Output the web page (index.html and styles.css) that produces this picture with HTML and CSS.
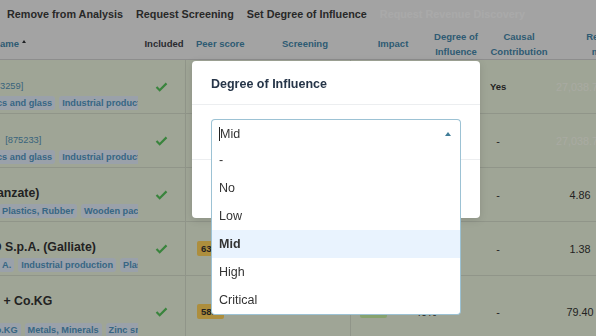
FILE: index.html
```html
<!DOCTYPE html>
<html lang="en">
<head>
    <meta charset="UTF-8">
    <meta name="viewport" content="width=device-width, initial-scale=1.0">
    <title>Analysis - Degree of Influence</title>
    <link rel="stylesheet" href="styles.css">
</head>
<body>
    <div class="toolbar">
        <button class="tool">Remove from Analysis</button>
        <button class="tool">Request Screening</button>
        <button class="tool">Set Degree of Influence</button>
        <button class="tool" disabled>Request Revenue Discovery</button>
    </div>

    <div class="table-scroll">
        <div class="table">
            <div class="row head">
                <div class="cell first">ame <span class="sort"></span></div>
                <div class="cell dark">Included</div>
                <div class="cell peer">Peer score</div>
                <div class="cell">Screening</div>
                <div class="cell">Impact</div>
                <div class="cell">Degree of<br>Influence</div>
                <div class="cell">Causal<br>Contribution</div>
                <div class="cell">Revenue<br>mEUR</div>
            </div>

            <div class="row">
                <div class="cell name">
                    <div class="title"><span class="id">3259]</span></div>
                    <div class="tags">
                        <span class="tag cut-m">cs and glass</span>
                        <span class="tag">Industrial production</span>
                    </div>
                </div>
                <div class="cell incl"><svg class="check" viewBox="0 0 14 11" width="13" height="10"><path d="M1.5 5.5 L5 9 L12.5 1.5"/></svg></div>
                <div class="cell peer"><span class="badge score">71.4</span></div>
                <div class="cell"></div>
                <div class="cell impact"></div>
                <div class="cell">-</div>
                <div class="cell causal"><span class="val strong">Yes</span></div>
                <div class="cell revenue muted">27,038.72</div>
            </div>

            <div class="row">
                <div class="cell name">
                    <div class="title"><span class="id">&nbsp;&nbsp;[875233]</span></div>
                    <div class="tags">
                        <span class="tag cut-m">cs and glass</span>
                        <span class="tag">Industrial production</span>
                    </div>
                </div>
                <div class="cell incl"><svg class="check" viewBox="0 0 14 11" width="13" height="10"><path d="M1.5 5.5 L5 9 L12.5 1.5"/></svg></div>
                <div class="cell peer"><span class="badge score">71.4</span></div>
                <div class="cell"></div>
                <div class="cell impact"></div>
                <div class="cell">-</div>
                <div class="cell causal"><span class="val">-</span></div>
                <div class="cell revenue muted">27,038.72</div>
            </div>

            <div class="row">
                <div class="cell name">
                    <div class="title"><span class="cut-a">anzate)</span></div>
                    <div class="tags">
                        <span class="tag cut-s">Plastics, Rubber</span>
                        <span class="tag">Wooden packaging</span>
                    </div>
                </div>
                <div class="cell incl"><svg class="check" viewBox="0 0 14 11" width="13" height="10"><path d="M1.5 5.5 L5 9 L12.5 1.5"/></svg></div>
                <div class="cell peer"></div>
                <div class="cell"></div>
                <div class="cell impact"></div>
                <div class="cell">-</div>
                <div class="cell causal"><span class="val">-</span></div>
                <div class="cell revenue">4.86</div>
            </div>

            <div class="row">
                <div class="cell name">
                    <div class="title"><span class="cut-t">O</span> S.p.A. (Galliate)</div>
                    <div class="tags">
                        <span class="tag cut-s">A.</span>
                        <span class="tag">Industrial production</span>
                        <span class="tag">Plastics</span>
                    </div>
                </div>
                <div class="cell incl"><svg class="check" viewBox="0 0 14 11" width="13" height="10"><path d="M1.5 5.5 L5 9 L12.5 1.5"/></svg></div>
                <div class="cell peer"><span class="badge score">63.2</span></div>
                <div class="cell"></div>
                <div class="cell impact"></div>
                <div class="cell">-</div>
                <div class="cell causal"><span class="val">-</span></div>
                <div class="cell revenue">1.38</div>
            </div>

            <div class="row tall">
                <div class="cell name">
                    <div class="title">&nbsp;+ Co.KG</div>
                    <div class="idline"></div>
                    <div class="tags">
                        <span class="tag cut-l">Co.KG</span>
                        <span class="tag">Metals, Minerals</span>
                        <span class="tag">Zinc smelting</span>
                    </div>
                </div>
                <div class="cell incl"><svg class="check" viewBox="0 0 14 11" width="13" height="10"><path d="M1.5 5.5 L5 9 L12.5 1.5"/></svg></div>
                <div class="cell peer"><span class="badge score">58.0</span></div>
                <div class="cell"></div>
                <div class="cell impact"><span class="badge low">25%</span><span>40%</span></div>
                <div class="cell"></div>
                <div class="cell causal"><span class="val">-</span></div>
                <div class="cell revenue">79.40</div>
            </div>
        </div>
    </div>

    <div class="backdrop"></div>

    <div class="modal">
        <div class="modal-header">Degree of Influence</div>
        <div class="modal-body">
            <div class="select">
                <div class="select-control">
                    <span class="caret-line"></span>Mid
                    <span class="arrow"></span>
                </div>
                <div class="options">
                    <div class="option">-</div>
                    <div class="option">No</div>
                    <div class="option">Low</div>
                    <div class="option active">Mid</div>
                    <div class="option">High</div>
                    <div class="option">Critical</div>
                </div>
            </div>
        </div>
        <div class="modal-footer">
            <button class="btn">Cancel</button>
            <button class="btn primary">Save</button>
        </div>
    </div>
</body>
</html>
```

FILE: styles.css
```css
* {
    margin: 0;
    padding: 0;
    box-sizing: border-box;
}

html, body {
    width: 100%;
    height: 100%;
    overflow: hidden;
}

body {
    font-family: 'Liberation Sans', Arial, sans-serif;
    background: #ebf3dd;
    color: #333;
}

/* toolbar */
.toolbar {
    display: flex;
    align-items: center;
    gap: 13px;
    height: 28px;
    padding-left: 7px;
    background: #f1f1f1;
}

.tool {
    font: bold 10.8px 'Liberation Sans', Arial, sans-serif;
    color: #3c3c3c;
    background: none;
    border: none;
    white-space: nowrap;
}

.tool:disabled {
    color: #fafafa;
}

/* table */
.table-scroll {
    overflow: hidden;
}

.table {
    width: 650px;
}

.row {
    display: grid;
    grid-template-columns: 143px 42px 75px 90px 86px 40px 86px 88px;
    border-bottom: 1px solid #d5dccb;
}

.row.head {
    height: 32px;
    background: #f1f1f1;
    border-bottom-color: #d0d0d0;
}

.cell {
    display: flex;
    align-items: center;
    justify-content: center;
    text-align: center;
    font-size: 10.8px;
    white-space: nowrap;
}

.head .cell {
    font-size: 9.5px;
    font-weight: bold;
    line-height: 15px;
    color: #4587aa;
}

.head .cell.dark {
    color: #3d4048;
}

.head .first {
    justify-content: flex-start;
}

.head .peer {
    justify-content: flex-start;
    padding-left: 11px;
    border-left: none;
}

.sort {
    display: inline-block;
    margin: 0 0 4px 3px;
    border-left: 2.5px solid transparent;
    border-right: 2.5px solid transparent;
    border-bottom: 3.5px solid #2f3236;
}

.name {
    align-self: start;
    flex-direction: column;
    align-items: stretch;
    justify-content: flex-start;
    text-align: left;
    overflow: hidden;
    margin-right: 5px;
    padding: 17px 0 3px;
}

.title {
    height: 16px;
    line-height: 16px;
    font-size: 12.3px;
    font-weight: bold;
    color: #333;
}

.id {
    font-size: 9.3px;
    font-weight: normal;
    color: #5493b8;
}

.idline {
    height: 12px;
}

.tags {
    display: flex;
    gap: 4px;
    margin-top: 3px;
}

.tag {
    flex-shrink: 0;
    height: 14px;
    line-height: 14px;
    padding: 0 3px;
    border-radius: 3px;
    background: #e3eefb;
    color: #5297c3;
    font-size: 9.2px;
    font-weight: bold;
}

.cut-s { margin-left: -1px; }
.cut-m { margin-left: -6px; }
.cut-l { margin-left: -14px; }
.cut-t { margin-left: -8px; }
.cut-a { margin-left: -3px; }

.tall .name {
    padding-bottom: 10px;
}

.tall .tags {
    margin-top: 2px;
}

.incl {
    padding-right: 6px;
}

.check {
    fill: none;
    stroke: #55c35a;
    stroke-width: 2.4;
}

.peer {
    justify-content: flex-start;
    padding-left: 11px;
    border-left: 1px solid #d5dccb;
}

.impact {
    justify-content: flex-start;
    gap: 28px;
    padding-left: 9px;
    border-left: 1px solid #d5dccb;
}

.badge {
    height: 15px;
    line-height: 15px;
    padding: 0 4px;
    border-radius: 2px;
    font-size: 9.5px;
    font-weight: bold;
    color: #333;
}

.badge.score {
    background: #ffd15a;
}

.badge.low {
    width: 40px;
    height: 13px;
    line-height: 13px;
    background: #c8efa2;
}

.causal {
    justify-content: flex-start;
    padding-left: 14px;
}

.val {
    min-width: 16px;
    text-align: center;
}

.val.strong {
    font-size: 9.5px;
    font-weight: bold;
}

.revenue {
    padding-right: 52px;
}

.revenue.muted {
    color: #f9fcef;
}

/* modal */
.backdrop {
    position: fixed;
    inset: 0;
    background: rgba(0, 0, 0, 0.32);
}

.modal {
    position: absolute;
    left: 192px;
    top: 61px;
    width: 288px;
    background: #fff;
    border-radius: 4px;
    box-shadow: 0 2px 8px rgba(0, 0, 0, 0.12);
}

.modal-header {
    display: flex;
    align-items: center;
    height: 44px;
    padding: 2px 19px 0;
    border-bottom: 1px solid #eceef0;
    font-size: 12.5px;
    font-weight: bold;
    color: #263548;
}

.modal-body {
    padding: 14px 19px 12px;
}

.modal-footer {
    display: flex;
    justify-content: flex-end;
    align-items: center;
    gap: 8px;
    height: 59px;
    padding: 0 19px;
    border-top: 1px solid #eceef0;
}

.btn {
    padding: 6px 12px;
    border: 1px solid #ccc;
    border-radius: 3px;
    background: #fff;
    font: 12px 'Liberation Sans', Arial, sans-serif;
}

.btn.primary {
    background: #337ab7;
    border-color: #2e6da4;
    color: #fff;
}

.select {
    position: relative;
}

.select-control {
    display: flex;
    align-items: center;
    height: 28px;
    padding: 0 9px 0 7px;
    border: 1px solid #9cc2d4;
    border-bottom: none;
    border-radius: 4px 4px 0 0;
    font-size: 12.5px;
    color: #333;
}

.caret-line {
    width: 1px;
    height: 14px;
    background: #222;
}

.arrow {
    margin-left: auto;
    border-left: 3.5px solid transparent;
    border-right: 3.5px solid transparent;
    border-bottom: 4px solid #3f7c97;
}

.options {
    position: absolute;
    top: 27px;
    left: 0;
    right: 0;
    z-index: 2;
    background: #fff;
    border: 1px solid #9cc2d4;
    border-top: none;
    border-radius: 0 0 4px 4px;
}

.option {
    display: flex;
    align-items: center;
    height: 28px;
    padding-left: 7px;
    font-size: 12.5px;
    color: #333;
}

.option.active {
    background: #e9f3fe;
    font-weight: bold;
}
```
